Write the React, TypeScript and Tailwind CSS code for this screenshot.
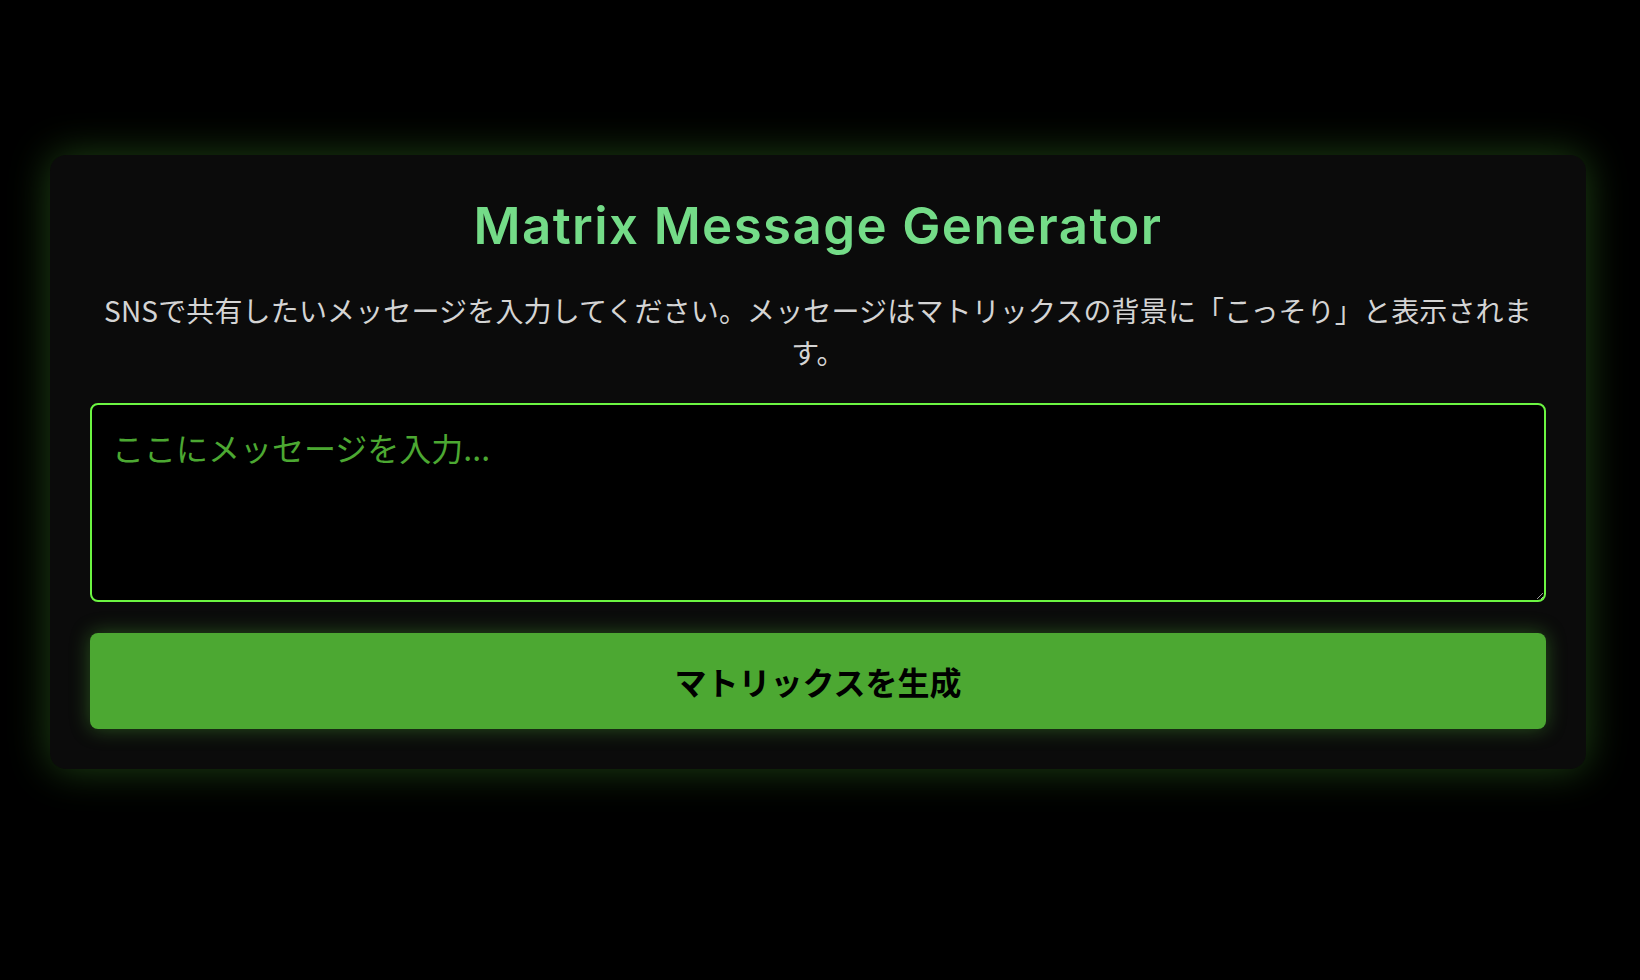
import React from "react";

export default function App() {
  return (
    <div className="min-h-[980px] w-full bg-black pt-[155px]" style={{ fontFamily: '"Noto Sans CJK JP", sans-serif' }}>
      <div className="ml-[50px] w-[1536px] rounded-2xl bg-[#0b0b0b] p-[40px] shadow-[0_0_40px_rgba(76,168,50,0.4)]">
        <h1
          className="mb-[32px] text-center text-[51px] leading-[62px] font-semibold tracking-[1.4px] text-[#74dc88]"
          style={{ fontFamily: 'Inter, "Noto Sans CJK JP", sans-serif' }}
        >
          Matrix Message Generator
        </h1>
        <p className="mb-[30px] text-center text-[28px] leading-[42px] tracking-[0.15px] text-[#d4d4d4]">
          SNSで共有したいメッセージを入力してください。メッセージはマトリックスの背景に「こっそり」と表示されます。
        </p>
        <textarea
          className="block h-[199px] w-full rounded-[8px] border-2 border-[#6cf542] bg-black px-[20px] pt-[19px] pb-[19px] text-[32px] leading-[46px] text-[#6cf542] outline-none placeholder:text-[#4ca832]"
          placeholder="ここにメッセージを入力..."
        />
        <button className="mt-[31px] block h-[96px] w-full rounded-[8px] bg-[#4ca832] text-[32px] font-bold text-black shadow-[0_0_20px_rgba(76,168,50,0.45)]">
          マトリックスを生成
        </button>
      </div>
    </div>
  );
}
